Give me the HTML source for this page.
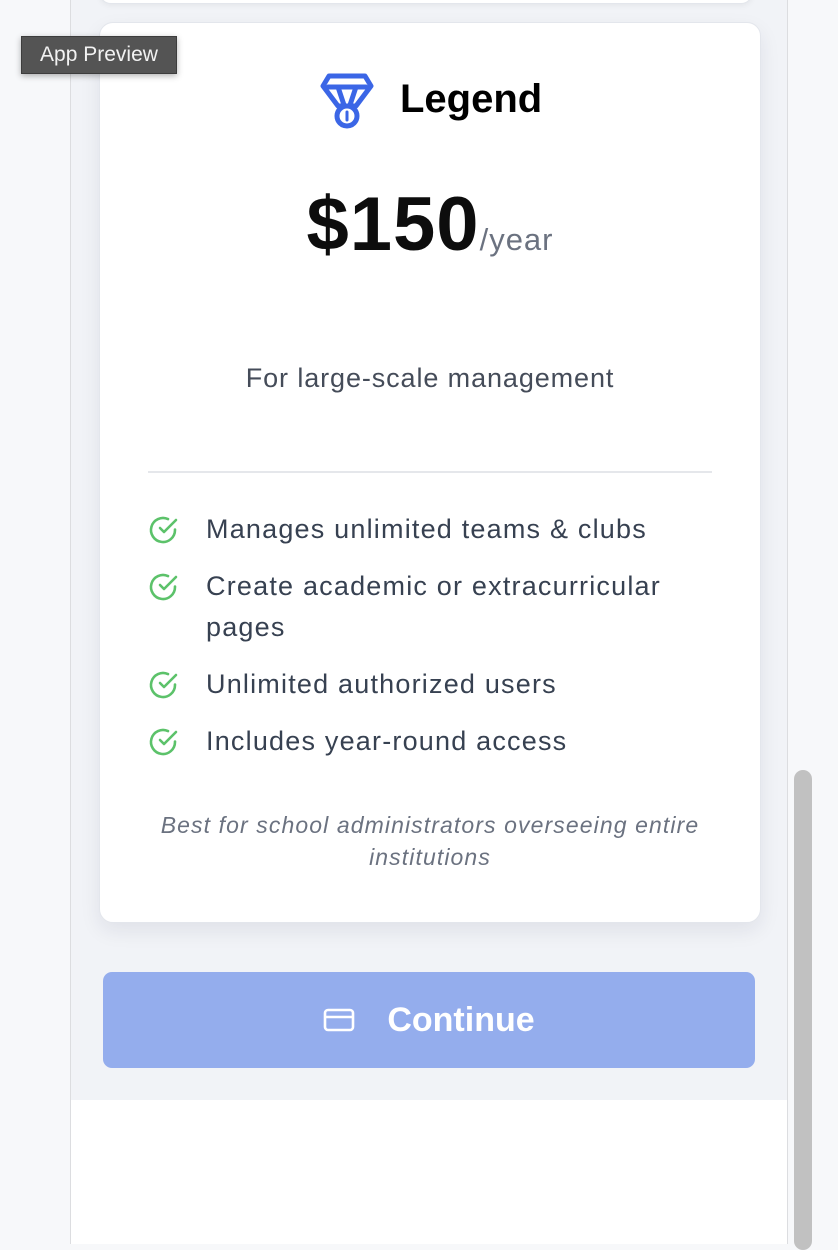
<!DOCTYPE html>
<html><head><meta charset="utf-8"><style>
*{margin:0;padding:0;box-sizing:border-box}
body{width:838px;height:1244px;position:relative;overflow:hidden;background:#f7f8fa;font-family:"Liberation Sans",Helvetica,Arial,sans-serif}
.frame{position:absolute;left:70px;top:0;width:718px;height:1244px;background:#fff;border-left:1px solid #dcdde0;border-right:1px solid #dcdde0}
.panel{position:absolute;left:0;top:0;width:716px;height:1100px;background:#f1f3f7}
.prev{position:absolute;left:28px;top:-20px;width:654px;height:24px;background:#fff;border:1px solid #e3e6ec;border-radius:14px;box-shadow:0 2px 6px rgba(0,0,0,.05)}
.card{position:absolute;left:28px;top:22px;width:662px;height:901px;background:#fff;border:1px solid #e3e6ec;border-radius:14px;box-shadow:0 8px 20px rgba(20,30,60,.08)}
.price{position:absolute;top:158px;width:100%;text-align:center;color:#0d0d0d;white-space:nowrap}
.price b{font-size:76px;font-weight:700;letter-spacing:1px}
.price span{font-size:31px;color:#6b7280;letter-spacing:1px}
.desc{position:absolute;top:340px;width:100%;text-align:center;font-size:27px;letter-spacing:0.9px;color:#454c59}
.hr{position:absolute;left:48px;right:48px;top:448px;border-top:2px solid #e5e7eb}
ul{list-style:none;position:absolute;left:48px;top:486px;width:525px}
li{position:relative;padding-left:58px;font-size:27px;letter-spacing:1.2px;line-height:41px;color:#374151;margin-bottom:16px}
li svg{position:absolute;left:0;top:5px}
.note{position:absolute;top:786px;width:100%;text-align:center;font-style:italic;font-size:23px;letter-spacing:1.1px;line-height:32px;color:#6b7280}
.btn{position:absolute;left:32px;top:972px;width:652px;height:96px;background:#94aded;border-radius:9px;color:#fff;font-size:34px;font-weight:700;display:flex;align-items:center;justify-content:center}
.tip{position:absolute;left:21px;top:36px;width:156px;height:38px;background:#545454;border:1px solid #3d3d3d;color:#f2f2f2;font-size:21px;line-height:36px;text-align:center;box-shadow:0 2px 6px rgba(0,0,0,.3)}
.sb{position:absolute;left:794px;top:770px;width:18px;height:480px;background:#c1c1c1;border-radius:9px}
</style></head><body>
<div class="frame"><div class="panel">
<div class="prev"></div>
<div class="card">
 <div style="position:absolute;left:220px;top:50px;">
  <svg width="54" height="56" viewBox="0 0 54 56" fill="none" stroke="#3b66e6" stroke-width="5" stroke-linejoin="round" stroke-linecap="round"><path d="M9 3h36l6 10-15 20H18L3 13z"/><path d="M8 14h38M18 14l6 18M36 14l-6 18"/><circle cx="27" cy="43" r="10"/><path d="M27 39v8" stroke-width="3"/></svg>
 </div>
 <div style="position:absolute;left:300px;top:54px;font-size:40px;font-weight:700;color:#000">Legend</div>
 <div class="price"><b>$150</b><span>/year</span></div>
 <div class="desc">For large-scale management</div>
 <div class="hr"></div>
 <ul>
  <li><svg width="32" height="32" viewBox="0 0 32 32" fill="none" stroke="#5cc26a" stroke-width="2.6" stroke-linecap="round" stroke-linejoin="round"><path d="M27 15.5V16a12 12 0 1 1-7-10.9"/><path d="M28 6L16 18l-4-4"/></svg>Manages unlimited teams &amp; clubs</li>
  <li><svg width="32" height="32" viewBox="0 0 32 32" fill="none" stroke="#5cc26a" stroke-width="2.6" stroke-linecap="round" stroke-linejoin="round"><path d="M27 15.5V16a12 12 0 1 1-7-10.9"/><path d="M28 6L16 18l-4-4"/></svg>Create academic or extracurricular pages</li>
  <li><svg width="32" height="32" viewBox="0 0 32 32" fill="none" stroke="#5cc26a" stroke-width="2.6" stroke-linecap="round" stroke-linejoin="round"><path d="M27 15.5V16a12 12 0 1 1-7-10.9"/><path d="M28 6L16 18l-4-4"/></svg>Unlimited authorized users</li>
  <li><svg width="32" height="32" viewBox="0 0 32 32" fill="none" stroke="#5cc26a" stroke-width="2.6" stroke-linecap="round" stroke-linejoin="round"><path d="M27 15.5V16a12 12 0 1 1-7-10.9"/><path d="M28 6L16 18l-4-4"/></svg>Includes year-round access</li>
 </ul>
 <div class="note">Best for school administrators overseeing entire<br>institutions</div>
</div>
<div class="btn"><svg width="32" height="26" viewBox="0 0 32 26" fill="none" stroke="#fff" stroke-width="2.6" style="margin-right:32px"><rect x="2" y="3" width="28" height="20" rx="3"/><path d="M2 10h28"/></svg>Continue</div>
</div></div>
<div class="sb"></div>
<div class="tip">App Preview</div>
</body></html>
